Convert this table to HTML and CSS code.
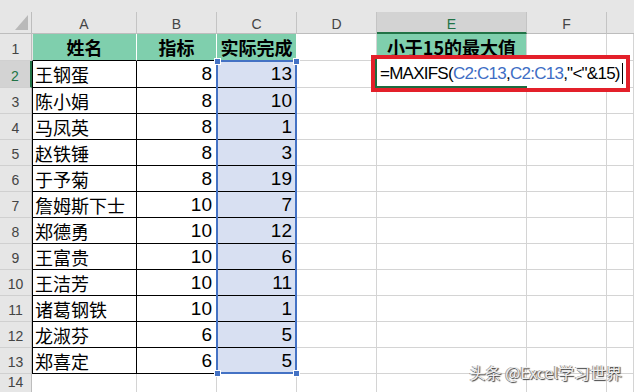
FILE: index.html
```html
<!DOCTYPE html>
<html lang="zh">
<head>
<meta charset="utf-8">
<title>MAXIFS</title>
<link rel="stylesheet" href="styles.css">
</head>
<body>
<div class="sheet">
  <div class="band"></div>

  <div class="ch corner"><span class="tri"></span></div>
  <div class="ch">A</div>
  <div class="ch">B</div>
  <div class="ch">C</div>
  <div class="ch">D</div>
  <div class="ch sel-col">E</div>
  <div class="ch">F</div>
  <div class="ch last"></div>

  <div class="rh">1</div>
  <div class="c t h1 a">姓名</div>
  <div class="c t h1">指标</div>
  <div class="c t h1">实际完成</div>
  <div class="c"></div>
  <div class="c h1e">小于15的最大值</div>
  <div class="c"></div>
  <div class="c"></div>

  <div class="rh sel-row">2</div>
  <div class="c t a name">王钢蛋</div>
  <div class="c t num">8</div>
  <div class="c t num s">13</div>
  <div class="c"></div>
  <div class="c"></div>
  <div class="c"></div>
  <div class="c"></div>

  <div class="rh">3</div>
  <div class="c t a name">陈小娟</div>
  <div class="c t num">8</div>
  <div class="c t num s">10</div>
  <div class="c"></div>
  <div class="c"></div>
  <div class="c"></div>
  <div class="c"></div>

  <div class="rh">4</div>
  <div class="c t a name">马凤英</div>
  <div class="c t num">8</div>
  <div class="c t num s">1</div>
  <div class="c"></div>
  <div class="c"></div>
  <div class="c"></div>
  <div class="c"></div>

  <div class="rh">5</div>
  <div class="c t a name">赵铁锤</div>
  <div class="c t num">8</div>
  <div class="c t num s">3</div>
  <div class="c"></div>
  <div class="c"></div>
  <div class="c"></div>
  <div class="c"></div>

  <div class="rh">6</div>
  <div class="c t a name">于予菊</div>
  <div class="c t num">8</div>
  <div class="c t num s">19</div>
  <div class="c"></div>
  <div class="c"></div>
  <div class="c"></div>
  <div class="c"></div>

  <div class="rh">7</div>
  <div class="c t a name">詹姆斯下士</div>
  <div class="c t num">10</div>
  <div class="c t num s">7</div>
  <div class="c"></div>
  <div class="c"></div>
  <div class="c"></div>
  <div class="c"></div>

  <div class="rh">8</div>
  <div class="c t a name">郑德勇</div>
  <div class="c t num">10</div>
  <div class="c t num s">12</div>
  <div class="c"></div>
  <div class="c"></div>
  <div class="c"></div>
  <div class="c"></div>

  <div class="rh">9</div>
  <div class="c t a name">王富贵</div>
  <div class="c t num">10</div>
  <div class="c t num s">6</div>
  <div class="c"></div>
  <div class="c"></div>
  <div class="c"></div>
  <div class="c"></div>

  <div class="rh">10</div>
  <div class="c t a name">王洁芳</div>
  <div class="c t num">10</div>
  <div class="c t num s">11</div>
  <div class="c"></div>
  <div class="c"></div>
  <div class="c"></div>
  <div class="c"></div>

  <div class="rh">11</div>
  <div class="c t a name">诸葛钢铁</div>
  <div class="c t num">10</div>
  <div class="c t num s">1</div>
  <div class="c"></div>
  <div class="c"></div>
  <div class="c"></div>
  <div class="c"></div>

  <div class="rh">12</div>
  <div class="c t a name">龙淑芬</div>
  <div class="c t num">6</div>
  <div class="c t num s">5</div>
  <div class="c"></div>
  <div class="c"></div>
  <div class="c"></div>
  <div class="c"></div>

  <div class="rh">13</div>
  <div class="c t a name">郑喜定</div>
  <div class="c t num">6</div>
  <div class="c t num s">5</div>
  <div class="c"></div>
  <div class="c"></div>
  <div class="c"></div>
  <div class="c"></div>

  <div class="rh">14</div>
  <div class="c"></div>
  <div class="c"></div>
  <div class="c"></div>
  <div class="c"></div>
  <div class="c"></div>
  <div class="c"></div>
  <div class="c"></div>

  <div class="range"></div>
  <span class="handle h-tl"></span>
  <span class="handle h-tr"></span>
  <span class="handle h-bl"></span>
  <span class="handle h-br"></span>

  <div class="editor"><div class="edit-inner">=MAXIFS(<span class="ref">C2:C13</span>,<span class="ref">C2:C13</span>,"&lt;"&amp;15)<span class="caret"></span></div></div>

  <div class="watermark">头条 @Excel学习世界</div>
</div>
</body>
</html>
```

FILE: styles.css
```css
* { box-sizing: border-box; }

html, body {
  margin: 0;
  padding: 0;
  background: #ffffff;
  overflow: hidden;
}

.sheet {
  position: relative;
  width: 634px;
  height: 392px;
  display: grid;
  grid-template-columns: 32px 105px 80px 80px 80px 150px 80px 1fr;
  grid-template-rows: 12px 22px 27px 27px repeat(11, 26px) 1fr;
  font-family: "Noto Sans CJK SC", "Liberation Sans", sans-serif;
  color: #000;
}

.band {
  grid-column: 1 / -1;
  background: #e6e6e6;
}

.ch {
  background: #e6e6e6;
  border-right: 1px solid #c4c4c4;
  border-bottom: 1px solid #bdbdbd;
  display: flex;
  align-items: center;
  justify-content: center;
  padding-top: 3px;
  font-family: "Liberation Sans", sans-serif;
  font-size: 14px;
  color: #444;
}

.ch.last { border-right: none; }

.corner {
  position: relative;
  border-right: 1px solid #bdbdbd;
}

.tri {
  position: absolute;
  right: 3px;
  bottom: 3px;
  width: 0;
  height: 0;
  border-left: 13px solid transparent;
  border-bottom: 15px solid #b9b9b9;
}

.ch.sel-col {
  background: #d3d3d3;
  color: #217346;
  border-bottom: 2px solid #217346;
}

.rh {
  background: #e6e6e6;
  border-right: 1px solid #bdbdbd;
  border-bottom: 1px solid #d0d0d0;
  display: flex;
  align-items: flex-end;
  justify-content: center;
  padding-bottom: 3px;
  font-family: "Liberation Sans", sans-serif;
  font-size: 14px;
  line-height: 16px;
  color: #444;
}

.rh.sel-row {
  background: #d3d3d3;
  color: #217346;
  border-right: 2px solid #217346;
}

.c {
  border-right: 1px solid #d4d4d4;
  border-bottom: 1px solid #d4d4d4;
  display: flex;
  align-items: center;
  white-space: nowrap;
  overflow: hidden;
}

.c.t {
  border-right-color: #000;
  border-bottom-color: #000;
}

.c.t.a { border-left: 1px solid #000; }

.c.h1 {
  background: #7fcfad;
  justify-content: center;
  font-weight: bold;
  font-size: 18px;
  border-right-color: #ffffff;
}

.c.h1.a { border-left-color: #e6e6e6; }

.c.h1e {
  background: #7fcfad;
  justify-content: center;
  font-weight: bold;
  font-size: 18px;
}

.name {
  font-size: 18px;
  padding-left: 2px;
}

.num {
  justify-content: flex-end;
  padding-right: 4px;
  font-family: "Liberation Sans", sans-serif;
  font-size: 19px;
}

.s { background: #d8e0f2; }

.range {
  position: absolute;
  left: 216px;
  top: 60px;
  width: 81px;
  height: 314px;
  border: 2px solid #4472c4;
  pointer-events: none;
}

.handle {
  position: absolute;
  width: 7px;
  height: 7px;
  background: #4472c4;
  border: 1px solid #ffffff;
}

.h-tl { left: 214px; top: 58px; }
.h-tr { left: 293px; top: 58px; }
.h-bl { left: 214px; top: 370px; }
.h-br { left: 293px; top: 370px; }

.editor {
  position: absolute;
  left: 371px;
  top: 55px;
  width: 259px;
  height: 37px;
  border: 4px solid #e3202a;
  background: #ffffff;
}

.edit-inner {
  position: relative;
  height: 100%;
  border-left: 2px solid #1d6b40;
  padding-left: 3px;
  display: flex;
  align-items: center;
  white-space: nowrap;
  font-family: "Liberation Sans", sans-serif;
  font-size: 17px;
  letter-spacing: -0.75px;
  color: #000;
}

.edit-inner::after {
  content: "";
  position: absolute;
  left: -2px;
  bottom: 0;
  width: 152px;
  height: 2px;
  background: #1d6b40;
}

.ref { color: #3e6dc4; }

.caret {
  display: inline-block;
  width: 1px;
  height: 21px;
  margin-left: 2px;
  background: #000;
}

.watermark {
  position: absolute;
  right: 12px;
  bottom: 8px;
  font-family: "Noto Sans CJK SC", sans-serif;
  font-size: 16px;
  color: #ededed;
  text-shadow: 1px 1px 1px #3a3a3a, -1px 0 0 #9a9a9a;
  white-space: nowrap;
}
```
